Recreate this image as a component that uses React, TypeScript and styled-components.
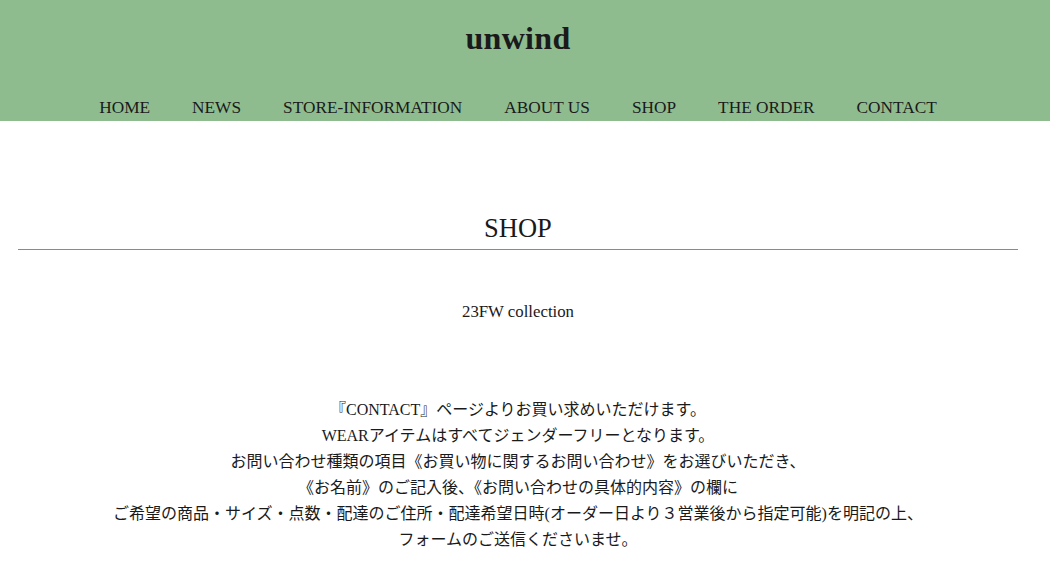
import React from 'react';
import styled, { createGlobalStyle } from 'styled-components';

const GlobalStyle = createGlobalStyle`
  html, body {
    margin: 0;
    padding: 0;
    background: #fff;
  }
  body {
    font-family: "Liberation Serif", "Noto Sans CJK JP", serif;
    color: #1a1a1a;
  }
`;

const Header = styled.header`
  background: #8fbc8f;
  padding: 18px 0 1px;
`;

const Inner = styled.div`
  width: 1036px;
  display: flex;
  flex-direction: column;
  align-items: center;
`;

const Logo = styled.h1`
  margin: 0;
  font-size: 32px;
  line-height: 40px;
  font-weight: 700;
  letter-spacing: 0.3px;
`;

const Nav = styled.nav`
  margin-top: 38px;
  display: flex;
  gap: 42px;
`;

const NavLink = styled.a`
  font-size: 17.3px;
  line-height: 24px;
  color: #1a1a1a;
  text-decoration: none;
`;

const Main = styled.main`
  width: 1036px;
  display: flex;
  flex-direction: column;
  align-items: center;
  padding-top: 91px;
`;

const Title = styled.h2`
  margin: 0;
  font-size: 26.5px;
  line-height: 32px;
  font-weight: 400;
`;

const Rule = styled.hr`
  width: 1000px;
  margin: 5px 0 0;
  border: 0;
  border-top: 1px solid #8a8a8a;
`;

const Collection = styled.p`
  margin: 50px 0 0;
  font-size: 16.8px;
  line-height: 24px;
`;

const Notice = styled.div`
  margin-top: 73px;
  text-align: center;
  font-size: 16px;
  line-height: 26px;
`;

const navItems = ['HOME', 'NEWS', 'STORE-INFORMATION', 'ABOUT US', 'SHOP', 'THE ORDER', 'CONTACT'];

const lines = [
  '『CONTACT』ページよりお買い求めいただけます。',
  'WEARアイテムはすべてジェンダーフリーとなります。',
  'お問い合わせ種類の項目《お買い物に関するお問い合わせ》をお選びいただき、',
  '《お名前》のご記入後、《お問い合わせの具体的内容》の欄に',
  'ご希望の商品・サイズ・点数・配達のご住所・配達希望日時(オーダー日より３営業後から指定可能)を明記の上、',
  'フォームのご送信くださいませ。',
];

const App: React.FC = () => {
  return (
    <>
      <GlobalStyle />
      <Header>
        <Inner>
          <Logo>unwind</Logo>
          <Nav>
            {navItems.map((item) => (
              <NavLink key={item} href="#">
                {item}
              </NavLink>
            ))}
          </Nav>
        </Inner>
      </Header>
      <Main>
        <Title>SHOP</Title>
        <Rule />
        <Collection>23FW collection</Collection>
        <Notice>
          {lines.map((line) => (
            <div key={line}>{line}</div>
          ))}
        </Notice>
      </Main>
    </>
  );
};

export default App;
